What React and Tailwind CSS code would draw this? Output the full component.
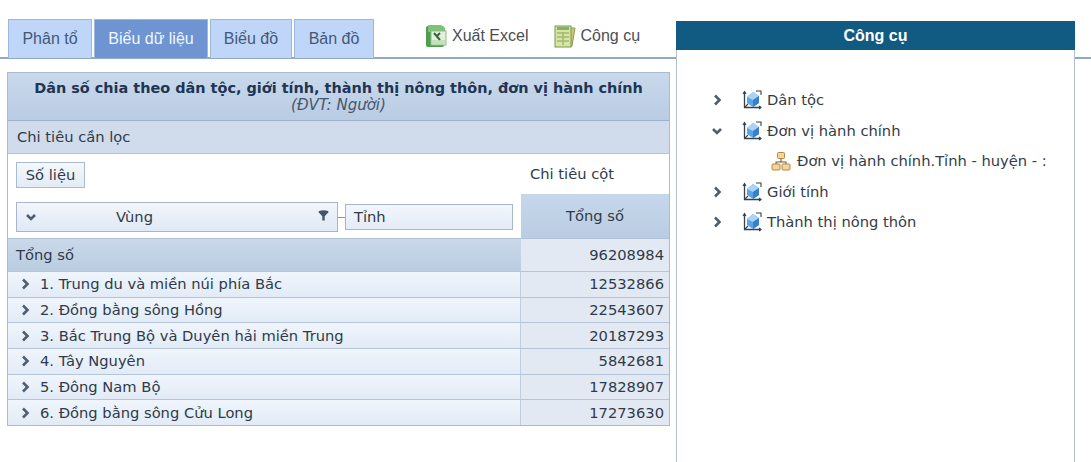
import React from "react";

const font = { fontFamily: '"DejaVu Sans", Verdana, sans-serif' };

const rows = [
  ["1. Trung du và miền núi phía Bắc", "12532866"],
  ["2. Đồng bằng sông Hồng", "22543607"],
  ["3. Bắc Trung Bộ và Duyên hải miền Trung", "20187293"],
  ["4. Tây Nguyên", "5842681"],
  ["5. Đông Nam Bộ", "17828907"],
  ["6. Đồng bằng sông Cửu Long", "17273630"],
];

const dims = [
  { name: "Dân tộc" },
  { name: "Đơn vị hành chính", open: true },
  { name: "Giới tính" },
  { name: "Thành thị nông thôn" },
];

function Tab({ label, active, width }) {
  return (
    <div
      className={`${width} h-[39px] flex items-center justify-center border border-b-0 border-[#9db8d8] ${
        active ? "bg-[#6e94d2] text-[#f2f6fc]" : "bg-[#c0d6f8] text-[#42597a]"
      }`}
    >
      {label}
    </div>
  );
}

function ExcelIcon() {
  return (
    <svg width="22" height="24" viewBox="0 0 22 24" className="shrink-0">
      <rect x="1" y="2" width="18" height="21" rx="2" fill="#4f9e4f" />
      <path d="M3 1h13l4 3v4H3z" fill="#7cc277" />
      <rect x="6" y="7" width="15" height="14" fill="#e4f0dc" stroke="#8dbb85" />
      <path d="M9 9l6 7M15 9l-3 3" stroke="#2f6b3a" strokeWidth="2" fill="none" />
      <path d="M7 17h13M7 19h13" stroke="#a9cf9f" />
    </svg>
  );
}

function ToolIcon() {
  return (
    <svg width="22" height="24" viewBox="0 0 22 24" className="shrink-0">
      <path d="M15 4h6l-3 18h-4z" fill="#cfc67a" stroke="#8f9a55" />
      <rect x="1" y="2" width="16" height="21" fill="#dbe3a2" stroke="#6f9a55" />
      <rect x="3" y="3" width="12" height="3" fill="#7fb26a" />
      <path d="M3 9h12M3 13h12M3 17h12M9 8v13" stroke="#9dbb73" strokeWidth="1.5" />
    </svg>
  );
}

function CubeIcon() {
  return (
    <svg width="20" height="20" viewBox="0 0 20 20" className="shrink-0">
      <path d="M2.5 2v15.5H19" stroke="#33424f" strokeWidth="1.3" fill="none" />
      <path d="M1 4l1.5-2.5L4 4M17 16l2 1.5-2 1.5" stroke="#33424f" strokeWidth="1.1" fill="none" />
      <path d="M3 17L6 14" stroke="#33424f" strokeWidth="1.1" />
      <path d="M5 7l6-5 6 4v7l-6 4-6-4z" fill="#5ba4e6" />
      <path d="M5 7l6 3 6-4-6-4z" fill="#a9d4f6" />
      <path d="M11 10v7l6-4V6z" fill="#3a7fca" />
      <path d="M14 1h5v4" stroke="#33424f" strokeWidth="1.1" fill="none" />
    </svg>
  );
}

function HierarchyIcon() {
  return (
    <svg width="20" height="20" viewBox="0 0 20 20" className="shrink-0">
      <path d="M10 7v4M5 14v-3h10v3" stroke="#6b5a3a" strokeWidth="1.1" fill="none" />
      <rect x="6.5" y="1.5" width="7" height="6" rx="1" fill="#f3d49a" stroke="#b8863f" />
      <rect x="1" y="13" width="8" height="6" rx="1" fill="#f3d49a" stroke="#b8863f" />
      <rect x="11" y="13" width="8" height="6" rx="1" fill="#f3d49a" stroke="#b8863f" />
    </svg>
  );
}

function FilterIcon() {
  return (
    <svg width="11" height="11" viewBox="0 0 11 11" className="shrink-0 mb-[3px]">
      <ellipse cx="5.5" cy="2" rx="5" ry="1.8" fill="#44566b" />
      <path d="M1 2.5h9L7 6H4z" fill="#44566b" />
      <rect x="4.3" y="5.5" width="2.4" height="5" fill="#44566b" />
    </svg>
  );
}

// thick little chevrons, same as the tree expanders in the picture
function Chevron({ open }) {
  return (
    <svg width="12" height="12" viewBox="0 0 12 12" className="shrink-0">
      <path
        d={open ? "M2 4l4 4 4-4" : "M4 1.5l4.5 4.5L4 10.5"}
        stroke="#4f5f72"
        strokeWidth="2.6"
        fill="none"
      />
    </svg>
  );
}

export default function App() {
  return (
    <div className="w-[1091px] h-[462px] overflow-hidden bg-white flex text-[14.7px] text-[#2f3b4a]" style={font}>
      {/* Left side */}
      <div className="w-[676px] shrink-0 pt-[19px] flex flex-col">
        <div className="h-[40px] border-b-2 border-[#8fa8c4] pl-[8px] flex gap-[2px] text-[16px]" style={{ fontFamily: '"Liberation Sans", Arial, sans-serif' }}>
          <Tab label="Phân tổ" width="w-[84px]" />
          <Tab label="Biểu dữ liệu" width="w-[114px]" active />
          <Tab label="Biểu đồ" width="w-[82px]" />
          <Tab label="Bản đồ" width="w-[80px]" />
          <div className="flex items-center ml-[49px] gap-[5px] text-[#4a4f55] pb-[4px]">
            <ExcelIcon />
            <span>Xuất Excel</span>
          </div>
          <div className="flex items-center ml-[24px] gap-[4px] text-[#4a4f55] pb-[4px]">
            <ToolIcon />
            <span>Công cụ</span>
          </div>
        </div>

        {/* Pivot table */}
        <div className="mt-[13px] ml-[7px] w-[663px] border border-[#a9bbd2]">
          <div className="h-[48px] bg-gradient-to-b from-[#c9d9ec] to-[#b9cce4] border-b border-[#9fb1c8] flex flex-col items-center justify-center">
            <div className="font-bold text-[14.45px] leading-[17px] text-[#1f3552] mb-[1px]">
              Dân số chia theo dân tộc, giới tính, thành thị nông thôn, đơn vị hành chính
            </div>
            <div className="italic text-[15px] leading-[15px] text-[#46566b]">(ĐVT: Người)</div>
          </div>
          <div className="h-[33px] bg-[#d0dcec] border-b border-[#b4c4d8] pl-[9px] flex items-center">Chi tiêu cần lọc</div>

          <div className="flex h-[84px]">
            <div className="w-[513px] pl-[8px]">
              <div className="mt-[8px] w-[69px] h-[26px] border border-[#a9bbd2] bg-gradient-to-b from-[#f4f8fd] to-[#e2ebf6] flex items-center justify-center">
                Số liệu
              </div>
              <div className="mt-[14px] flex items-center">
                <div className="w-[322px] h-[30px] border border-[#a9b6c8] bg-gradient-to-b from-[#f2f6fc] to-[#e0e9f5] flex items-center pl-[8px] pr-[8px]">
                  <Chevron open />
                  <span className="flex-1 text-center pr-[86px]">Vùng</span>
                  <FilterIcon />
                </div>
                <div className="w-[7px] h-px bg-[#8b99ab]" />
                <div className="w-[168px] h-[26px] border border-[#a9b6c8] bg-gradient-to-b from-[#f2f6fc] to-[#e4ecf7] flex items-center pl-[8px]">
                  Tỉnh
                </div>
              </div>
            </div>
            <div className="flex-1 flex flex-col">
              <div className="h-[40px] flex items-center pl-[9px]">Chi tiêu cột</div>
              <div className="flex-1 bg-gradient-to-b from-[#c6d7ea] to-[#b9cde2] flex items-center justify-center">Tổng số</div>
            </div>
          </div>

          {/* Data rows */}
          <div className="flex h-[33px] border-t border-[#b4c2d6]">
            <div className="w-[513px] bg-gradient-to-b from-[#c9d9ea] to-[#b9cce0] pl-[8px] flex items-center">Tổng số</div>
            <div className="flex-1 bg-[#e3e9f2] flex items-center justify-end pr-[5px]">96208984</div>
          </div>
          {rows.map(([name, value]) => (
            <div key={name} className="flex h-[25.67px] border-t border-[#b4c4da]">
              <div className="w-[513px] bg-gradient-to-b from-[#f0f5fc] to-[#e2ebf6] pl-[11px] flex items-center gap-[9px] border-r border-[#c0cddd]">
                <Chevron />
                <span>{name}</span>
              </div>
              <div className="flex-1 bg-[#e3e9f2] flex items-center justify-end pr-[5px]">{value}</div>
            </div>
          ))}
        </div>
      </div>

      {/* Right panel */}
      <div className="w-[399px] shrink-0 pt-[21px] flex flex-col">
        <div className="h-[29px] bg-[#115a82] text-white font-bold flex items-center justify-center text-[16px]" style={{ fontFamily: '"Liberation Sans", Arial, sans-serif' }}>
          Công cụ
        </div>
        <div className="flex-1 border-x border-[#b4c0d2] pt-[35px] pl-[34px] overflow-hidden text-[#333c47]">
          {dims.map((d) => (
            <div key={d.name}>
              <div className="h-[30.5px] flex items-center">
                <div className="w-[31px]">
                  <Chevron open={d.open} />
                </div>
                <CubeIcon />
                <span className="ml-[5px] whitespace-nowrap">{d.name}</span>
              </div>
              {d.open && (
                <div className="h-[30.5px] flex items-center pl-[60px]">
                  <HierarchyIcon />
                  <span className="ml-[6px] whitespace-nowrap">Đơn vị hành chính.Tỉnh - huyện - :</span>
                </div>
              )}
            </div>
          ))}
        </div>
      </div>

      {/* Stub of the tab rule right of the panel */}
      <div className="flex-1 pt-[57px]">
        <div className="h-[2px] bg-[#8fa8c4]" />
      </div>
    </div>
  );
}
